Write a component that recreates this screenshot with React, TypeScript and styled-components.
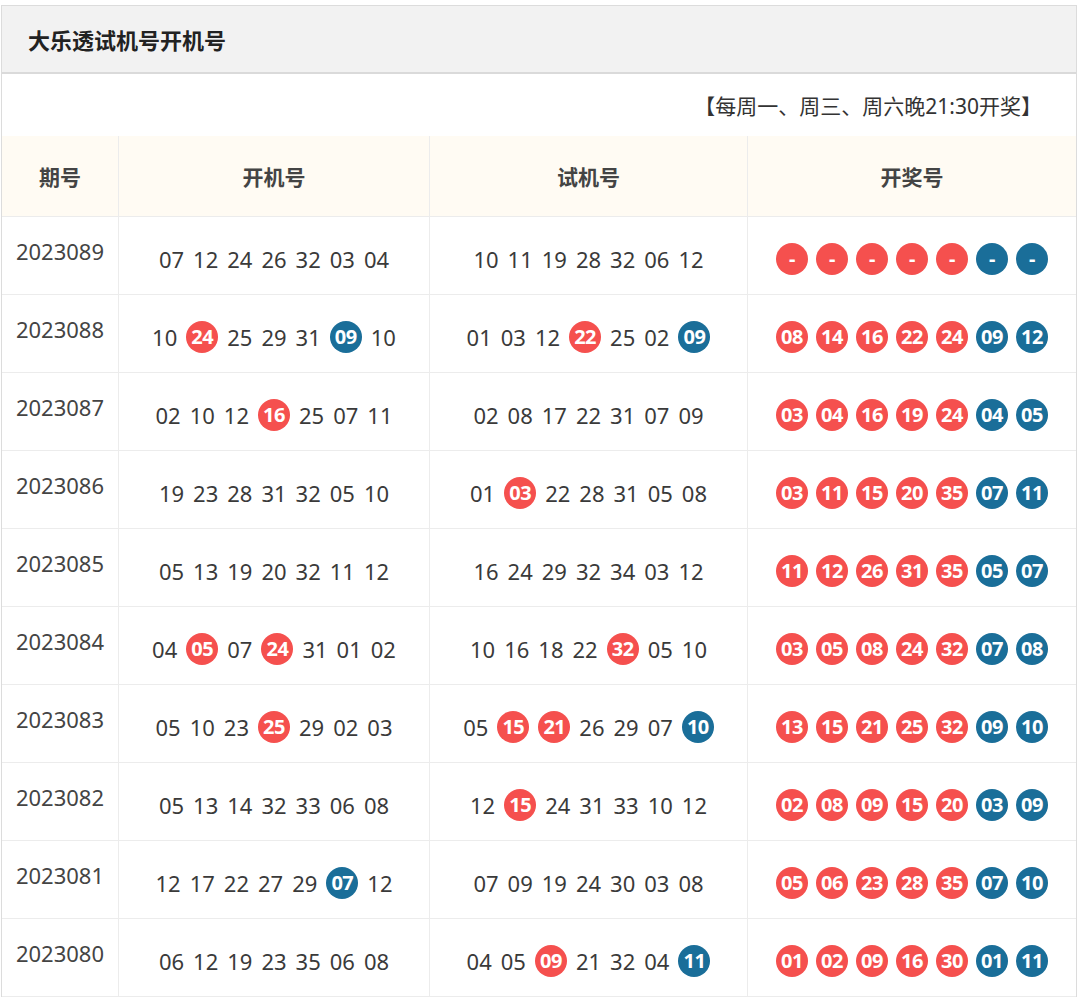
import React from "react";
import styled, { createGlobalStyle } from "styled-components";

const Global = createGlobalStyle`
  body { margin: 0; background: #fff; font-family: "Noto Sans", "Noto Sans CJK SC", sans-serif; }
`;

const Panel = styled.div`
  margin: 5px 3px 0 1px;
  border: 1px solid #dcdcdc;
  border-bottom: none;
`;
const Title = styled.div`
  height: 66px;
  background: #f2f2f2;
  border-bottom: 2px solid #dadada;
  display: flex;
  align-items: center;
  padding-left: 26px;
  font-size: 22px;
  font-weight: 700;
  color: #222;
`;
const Note = styled.div`
  height: 62px;
  display: flex;
  align-items: center;
  justify-content: flex-end;
  padding-right: 34px;
  font-size: 21px;
  color: #333;
`;
const Table = styled.div`
  display: grid;
  grid-template-columns: 116px 311px 318px 1fr;
`;
const Head = styled.div`
  height: 80px;
  background: #fffbf3;
  display: flex;
  align-items: center;
  justify-content: center;
  font-size: 21px;
  font-weight: 700;
  color: #444;
  border-left: 1px solid #ececec;
  &:first-child { border-left: none; }
  border-bottom: 1px solid #ececec;
`;
const Cell = styled.div<{ $period?: boolean }>`
  height: 78px;
  display: flex;
  align-items: center;
  justify-content: center;
  gap: ${p => (p.$period ? 0 : 9)}px;
  border-left: ${p => (p.$period ? "none" : "1px solid #ececec")};
  border-bottom: 1px solid #ececec;
  font-size: 22px;
  color: ${p => (p.$period ? "#444" : "#3a3a3a")};
  padding: ${p => (p.$period ? "0 0 10px" : "6px 0 0")};
  box-sizing: border-box;
`;
const Ball = styled.span<{ $blue?: boolean }>`
  width: 32px;
  height: 32px;
  border-radius: 50%;
  background: ${p => (p.$blue ? "#1a6e99" : "#f5504e")};
  color: #fff;
  font-size: 20px;
  font-weight: 700;
  display: inline-flex;
  align-items: center;
  justify-content: center;
  letter-spacing: -0.5px;
`;
const Balls = styled.div`
  display: flex;
  gap: 8px;
`;

type Row = { p: string; k: string; kr: number[]; kb: number[]; s: string; sr: number[]; sb: number[]; w: string[] };
const rows: Row[] = [
  { p: "2023089", k: "07 12 24 26 32 03 04", kr: [], kb: [], s: "10 11 19 28 32 06 12", sr: [], sb: [], w: ["-","-","-","-","-","-","-"] },
  { p: "2023088", k: "10 24 25 29 31 09 10", kr: [1], kb: [5], s: "01 03 12 22 25 02 09", sr: [3], sb: [6], w: "08 14 16 22 24 09 12".split(" ") },
  { p: "2023087", k: "02 10 12 16 25 07 11", kr: [3], kb: [], s: "02 08 17 22 31 07 09", sr: [], sb: [], w: "03 04 16 19 24 04 05".split(" ") },
  { p: "2023086", k: "19 23 28 31 32 05 10", kr: [], kb: [], s: "01 03 22 28 31 05 08", sr: [1], sb: [], w: "03 11 15 20 35 07 11".split(" ") },
  { p: "2023085", k: "05 13 19 20 32 11 12", kr: [], kb: [], s: "16 24 29 32 34 03 12", sr: [], sb: [], w: "11 12 26 31 35 05 07".split(" ") },
  { p: "2023084", k: "04 05 07 24 31 01 02", kr: [1, 3], kb: [], s: "10 16 18 22 32 05 10", sr: [4], sb: [], w: "03 05 08 24 32 07 08".split(" ") },
  { p: "2023083", k: "05 10 23 25 29 02 03", kr: [3], kb: [], s: "05 15 21 26 29 07 10", sr: [1, 2], sb: [6], w: "13 15 21 25 32 09 10".split(" ") },
  { p: "2023082", k: "05 13 14 32 33 06 08", kr: [], kb: [], s: "12 15 24 31 33 10 12", sr: [1], sb: [], w: "02 08 09 15 20 03 09".split(" ") },
  { p: "2023081", k: "12 17 22 27 29 07 12", kr: [], kb: [5], s: "07 09 19 24 30 03 08", sr: [], sb: [], w: "05 06 23 28 35 07 10".split(" ") },
  { p: "2023080", k: "06 12 19 23 35 06 08", kr: [], kb: [], s: "04 05 09 21 32 04 11", sr: [2], sb: [6], w: "01 02 09 16 30 01 11".split(" ") },
];

const Nums = ({ s, r, b }: { s: string; r: number[]; b: number[] }) => (
  <>
    {s.split(" ").map((n, i) =>
      r.includes(i) ? <Ball key={i}>{n}</Ball> : b.includes(i) ? <Ball key={i} $blue>{n}</Ball> : <span key={i}>{n}</span>
    )}
  </>
);

export default function App() {
  return (
    <>
      <Global />
      <Panel>
        <Title>大乐透试机号开机号</Title>
        <Note>【每周一、周三、周六晚21:30开奖】</Note>
        <Table>
          <Head>期号</Head>
          <Head>开机号</Head>
          <Head>试机号</Head>
          <Head>开奖号</Head>
          {rows.map(r => (
            <React.Fragment key={r.p}>
              <Cell $period>{r.p}</Cell>
              <Cell><Nums s={r.k} r={r.kr} b={r.kb} /></Cell>
              <Cell><Nums s={r.s} r={r.sr} b={r.sb} /></Cell>
              <Cell>
                <Balls>
                  {r.w.map((n, i) => <Ball key={i} $blue={i >= 5}>{n}</Ball>)}
                </Balls>
              </Cell>
            </React.Fragment>
          ))}
        </Table>
      </Panel>
    </>
  );
}
